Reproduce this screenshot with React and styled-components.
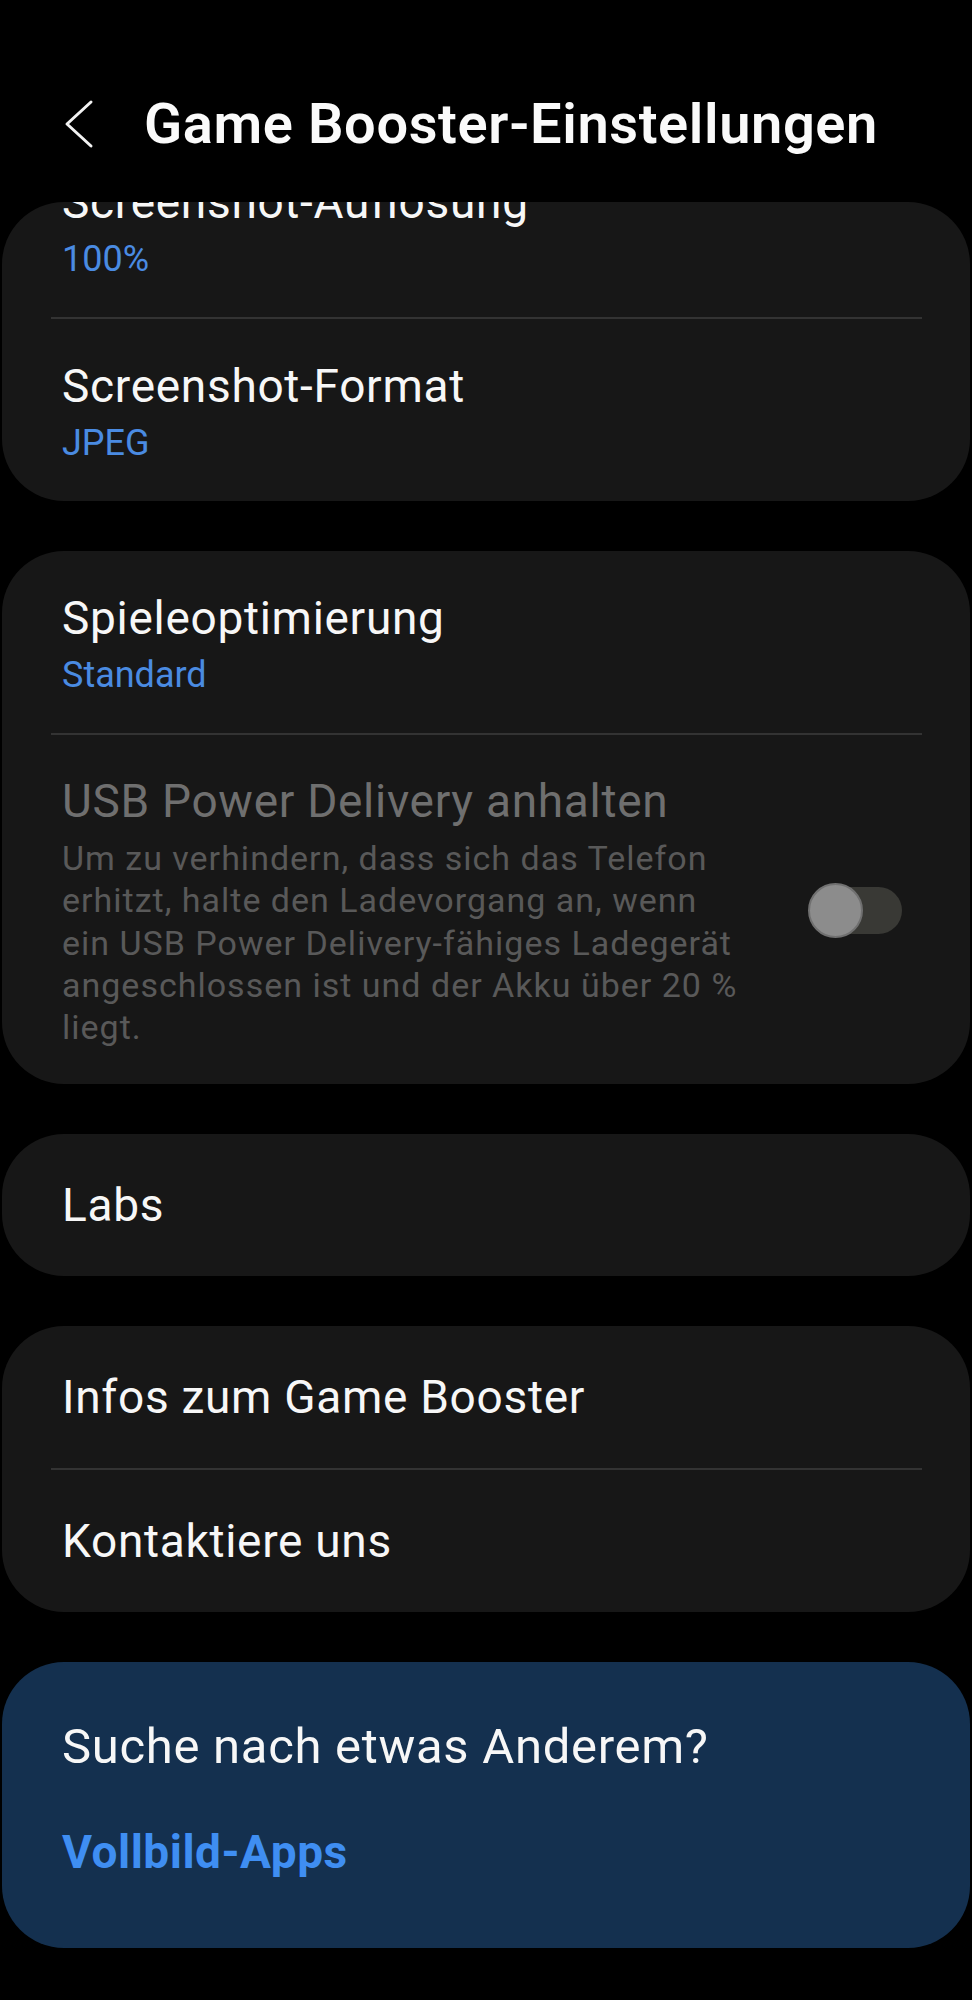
import React from "react";
import styled, { createGlobalStyle } from "styled-components";

const GlobalStyle = createGlobalStyle`
  html, body {
    margin: 0;
    padding: 0;
    background: #000;
  }
  body {
    font-family: Roboto, "Noto Sans", "Liberation Sans", sans-serif;
    -webkit-font-smoothing: antialiased;
  }
  * {
    box-sizing: border-box;
  }
`;

export default function App() {
  return (
    <>
      <GlobalStyle />
      <Screen>
        <Header>
          <BackButton aria-label="Zurück">
            <svg width="30" height="50" viewBox="0 0 30 50" fill="none">
              <path
                d="M27 3 L3 25 L27 47"
                stroke="#f2f2f2"
                strokeWidth="3"
                strokeLinecap="round"
                strokeLinejoin="round"
              />
            </svg>
          </BackButton>
          <Title>Game Booster-Einstellungen</Title>
        </Header>

        <List>
          <Card>
            <Row $clipped>
              <TextBlock>
                <Primary>Screenshot-Auflösung</Primary>
                <Secondary>100%</Secondary>
              </TextBlock>
            </Row>
            <Divider />
            <Row>
              <TextBlock>
                <Primary>Screenshot-Format</Primary>
                <Secondary>JPEG</Secondary>
              </TextBlock>
            </Row>
          </Card>

          <Card>
            <Row>
              <TextBlock>
                <Primary>Spieleoptimierung</Primary>
                <Secondary>Standard</Secondary>
              </TextBlock>
            </Row>
            <Divider />
            <Row $tall>
              <TextBlock>
                <Primary $disabled>USB Power Delivery anhalten</Primary>
                <Description>
                  Um zu verhindern, dass sich das Telefon erhitzt, halte den
                  Ladevorgang an, wenn ein USB Power Delivery-fähiges
                  Ladegerät angeschlossen ist und der Akku über 20 % liegt.
                </Description>
              </TextBlock>
              <Toggle>
                <Track />
                <Thumb />
              </Toggle>
            </Row>
          </Card>

          <Card>
            <Row $single>
              <Primary>Labs</Primary>
            </Row>
          </Card>

          <Card>
            <Row $single>
              <Primary>Infos zum Game Booster</Primary>
            </Row>
            <Divider />
            <Row $single>
              <Primary>Kontaktiere uns</Primary>
            </Row>
          </Card>

          <Card $accent>
            <Suggest>
              <SuggestTitle>Suche nach etwas Anderem?</SuggestTitle>
              <SuggestLink href="#">Vollbild-Apps</SuggestLink>
            </Suggest>
          </Card>
        </List>
      </Screen>
    </>
  );
}

const Screen = styled.div`
  width: 972px;
  min-height: 2000px;
  background: #000;
  color: #f7f7f7;
  display: flex;
  flex-direction: column;
`;

const Header = styled.header`
  display: flex;
  align-items: center;
  height: 202px;
  padding: 96px 0 50px 64px;
`;

const BackButton = styled.button`
  width: 80px;
  height: 56px;
  padding: 0;
  border: 0;
  background: none;
  display: flex;
  align-items: center;
  cursor: pointer;
`;

const Title = styled.h1`
  margin: 0;
  font-size: 56px;
  line-height: 56px;
  font-weight: 600;
  letter-spacing: 0.6px;
  color: #fafafa;
  white-space: nowrap;
`;

const List = styled.main`
  display: flex;
  flex-direction: column;
  gap: 50px;
  padding: 0 2px;
`;

const Card = styled.section`
  background: ${(p) => (p.$accent ? "#14304f" : "#171717")};
  border-radius: 62px;
  overflow: hidden;
`;

const Row = styled.div`
  display: flex;
  align-items: center;
  gap: 30px;
  padding: ${(p) =>
    p.$single
      ? "43px 66px 43px 60px"
      : p.$tall
      ? "38px 68px 36px 60px"
      : "39px 66px 35px 60px"};
  margin-top: ${(p) => (p.$clipped ? "-67px" : "0")};
`;

const TextBlock = styled.div`
  flex: 1;
  display: flex;
  flex-direction: column;
`;

const Primary = styled.div`
  font-size: 46px;
  line-height: 56px;
  letter-spacing: 0.7px;
  color: ${(p) => (p.$disabled ? "#6f6f6f" : "#f7f7f7")};
  white-space: nowrap;
`;

const Secondary = styled.div`
  font-size: 36px;
  line-height: 46px;
  margin-top: 6px;
  color: #4a8be2;
`;

const Description = styled.p`
  margin: 8px 0 0;
  max-width: 680px;
  font-size: 34px;
  line-height: 42.3px;
  letter-spacing: 1px;
  color: #595959;
`;

const Divider = styled.hr`
  height: 2px;
  margin: 0 48px 0 49px;
  border: 0;
  background: #333333;
`;

const Toggle = styled.div`
  position: relative;
  flex: none;
  width: 94px;
  height: 55px;
`;

const Track = styled.div`
  position: absolute;
  right: 0;
  top: 4px;
  width: 76px;
  height: 47px;
  border-radius: 24px;
  background: #393935;
`;

const Thumb = styled.div`
  position: absolute;
  left: 0;
  top: 0;
  width: 55px;
  height: 55px;
  border-radius: 50%;
  background: #8c8c8c;
  border: 2px solid #707070;
`;

const Suggest = styled.div`
  display: flex;
  flex-direction: column;
  padding: 57px 62px 68px 60px;
`;

const SuggestTitle = styled.div`
  font-size: 49px;
  line-height: 56px;
  letter-spacing: 0.7px;
  color: #f7f7f7;
`;

const SuggestLink = styled.a`
  margin-top: 49px;
  font-size: 46px;
  line-height: 56px;
  font-weight: 700;
  letter-spacing: 0.5px;
  color: #3f8ef2;
  text-decoration: none;
`;
